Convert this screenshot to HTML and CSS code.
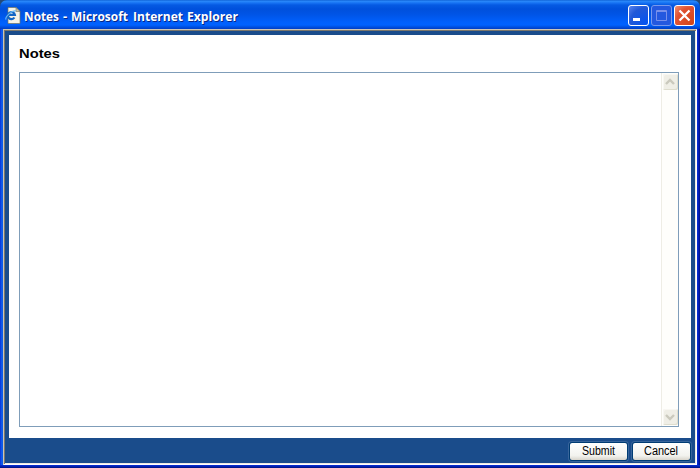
FILE: index.html
```html
<!DOCTYPE html>
<html lang="en">
<head>
<meta charset="utf-8">
<title>Notes</title>
<link rel="stylesheet" href="styles.css">
</head>
<body>
<div class="window">
  <header class="titlebar">
    <svg class="page-icon" width="16" height="17" viewBox="0 0 16 17">
      <path d="M3 .5h8l4 4v12H3z" fill="#f5f3e8" stroke="#77765f" stroke-width=".7"/>
      <path d="M11 .5v4h4z" fill="#c8c4ad" stroke="#77765f" stroke-width=".6"/>
      <path d="M9.4 10.500a3.5 3.5 0 1 1 .5-2.5H3.5" fill="none" stroke="#1265c5" stroke-width="2.200"/>
      <path d="M1.200 12.500C-1 10.500 7 3 11 4" fill="none" stroke="#65b5f3" stroke-width="1.200"/>
    </svg>
    <svg class="title" width="220" height="20" role="heading" aria-level="1">
      <g class="title-shadow" transform="translate(1 1)">
        <text x="1" y="14" textLength="35" lengthAdjust="spacingAndGlyphs">Notes</text>
        <text x="40" y="14">-</text>
        <text x="48" y="14" textLength="57" lengthAdjust="spacingAndGlyphs">Microsoft</text>
        <text x="110" y="14" textLength="50" lengthAdjust="spacingAndGlyphs">Internet</text>
        <text x="164" y="14" textLength="51" lengthAdjust="spacingAndGlyphs">Explorer</text>
      </g>
      <g class="title-text">
        <text x="1" y="14" textLength="35" lengthAdjust="spacingAndGlyphs">Notes</text>
        <text x="40" y="14">-</text>
        <text x="48" y="14" textLength="57" lengthAdjust="spacingAndGlyphs">Microsoft</text>
        <text x="110" y="14" textLength="50" lengthAdjust="spacingAndGlyphs">Internet</text>
        <text x="164" y="14" textLength="51" lengthAdjust="spacingAndGlyphs">Explorer</text>
      </g>
    </svg>
    <div class="controls">
      <span class="control"><svg width="19" height="19"><path d="M4 12h7v3H4z" fill="#fff"/></svg></span>
      <span class="control disabled"><svg width="19" height="19"><path d="M4.500 4.500h10v10h-10zM4 5.500h11" fill="none" stroke="#7890eb"/></svg></span>
      <span class="control close"><svg width="19" height="19"><path d="M4.500 4.500l10 10m0-10l-10 10" stroke="#fff" stroke-width="2.300"/></svg></span>
    </div>
  </header>
  <main class="frame">
    <section class="panel">
      <svg class="heading" width="60" height="20" role="heading" aria-level="2"><text x="0" y="14" textLength="41" lengthAdjust="spacingAndGlyphs">Notes</text></svg>
      <div class="notes">
        <div class="scrollbar">
          <span class="arrow"><svg width="15" height="16"><path d="M3 10l4-4 4 4" fill="none" stroke="#cac9bd" stroke-width="2.400"/></svg></span>
          <span class="arrow"><svg width="15" height="16"><path d="M3 6l4 4 4-4" fill="none" stroke="#cac9bd" stroke-width="2.400"/></svg></span>
        </div>
      </div>
    </section>
    <footer class="actions">
      <button class="button"><svg width="54" height="15"><text x="11" y="11" textLength="33" lengthAdjust="spacingAndGlyphs">Submit</text></svg></button>
      <button class="button"><svg width="54" height="15"><text x="10" y="11" textLength="34" lengthAdjust="spacingAndGlyphs">Cancel</text></svg></button>
    </footer>
  </main>
</div>
</body>
</html>
```
FILE: styles.css
```css
* { box-sizing: border-box; }
body { margin: 0; background: #244a79; overflow: hidden; }
svg { display: block; }
.window {
  width: 700px;
  height: 468px;
  padding: 0 3px 3px;
  border-radius: 7px 7px 0 0;
  background:
    linear-gradient(#0831d9, #0019a0 67%, #00117e) 0 100% / 100% 3px no-repeat,
    linear-gradient(90deg, #0831d9, #1263ef 67%, #0754df) 0 29px / 3px 100% no-repeat,
    linear-gradient(90deg, #0831d9, #0019b0 67%, #00117e) 100% 29px / 3px 100% no-repeat,
    linear-gradient(#0757cc 0, #2c8bfb 1px, #1672f3 3px, #055ae3 5px, #0050dc 9px, #0054e5 14px, #0060fc 22px, #0062ff 25px, #0050e0 27px, #003dc4 29px) 0 0 / 100% 29px no-repeat;
}
.titlebar { height: 29px; display: flex; align-items: flex-start; }
.page-icon { margin: 7px 0 0 2px; }
.title { margin: 7px 0 0 2px; overflow: visible; font: bold 13px "Open Sans", "Noto Sans", sans-serif; }
.title-text { fill: #fff; }
.title-shadow { fill: #092784; }
.controls { display: flex; gap: 2px; margin: 5px 2px 0 auto; }
.control {
  width: 21px;
  height: 21px;
  border: 1px solid #fff;
  border-radius: 3px;
  background: radial-gradient(circle at 90% 90%, #0554f0, #2259d7 65%, #5b85ef);
}
.control.disabled { border-color: #7899ed; background: #2458df; }
.control.close { background: radial-gradient(circle at 90% 90%, #d34618, #df5131 65%, #ef9274); }
.frame {
  height: 436px;
  border: 1px solid;
  border-color: #c8c5bb #fff #fff #c8c5bb;
  background: #1a4c8b;
  box-shadow: inset 1px 1px #7c776b, inset -1px -1px #ece9e1;
  padding: 5px 5px 4px;
}
.panel { height: 403px; padding: 9px 12px 11px 10px; background: #fff; }
.heading { font: bold 13.5px "Liberation Sans", Arial, sans-serif; margin-bottom: 8px; }
.notes { height: 355px; border: 1px solid #7f9db9; display: flex; justify-content: flex-end; }
.scrollbar {
  width: 17px;
  height: 353px;
  border-left: 1px solid #eeede5;
  padding: 1px 0 1px 1px;
  display: flex;
  flex-direction: column;
  justify-content: space-between;
  background: #fefefb;
}
.arrow { width: 15px; height: 16px; border-radius: 2px; background: #efeee6; box-shadow: inset -1px -1px #deddce, inset 1px 1px #f8f7f2; }
.actions { display: flex; justify-content: flex-end; gap: 4px; padding-top: 4px; }
.button {
  width: 59px;
  height: 19px;
  padding: 1px;
  border: 1px solid #003c74;
  border-radius: 3px;
  background: linear-gradient(#fff, #f2f2ee 75%, #d8d4cb);
  box-shadow: 0 0 0 1px #38659b;
}
.button text { font: 12px "Liberation Sans", Arial, sans-serif; fill: #000; }
```
